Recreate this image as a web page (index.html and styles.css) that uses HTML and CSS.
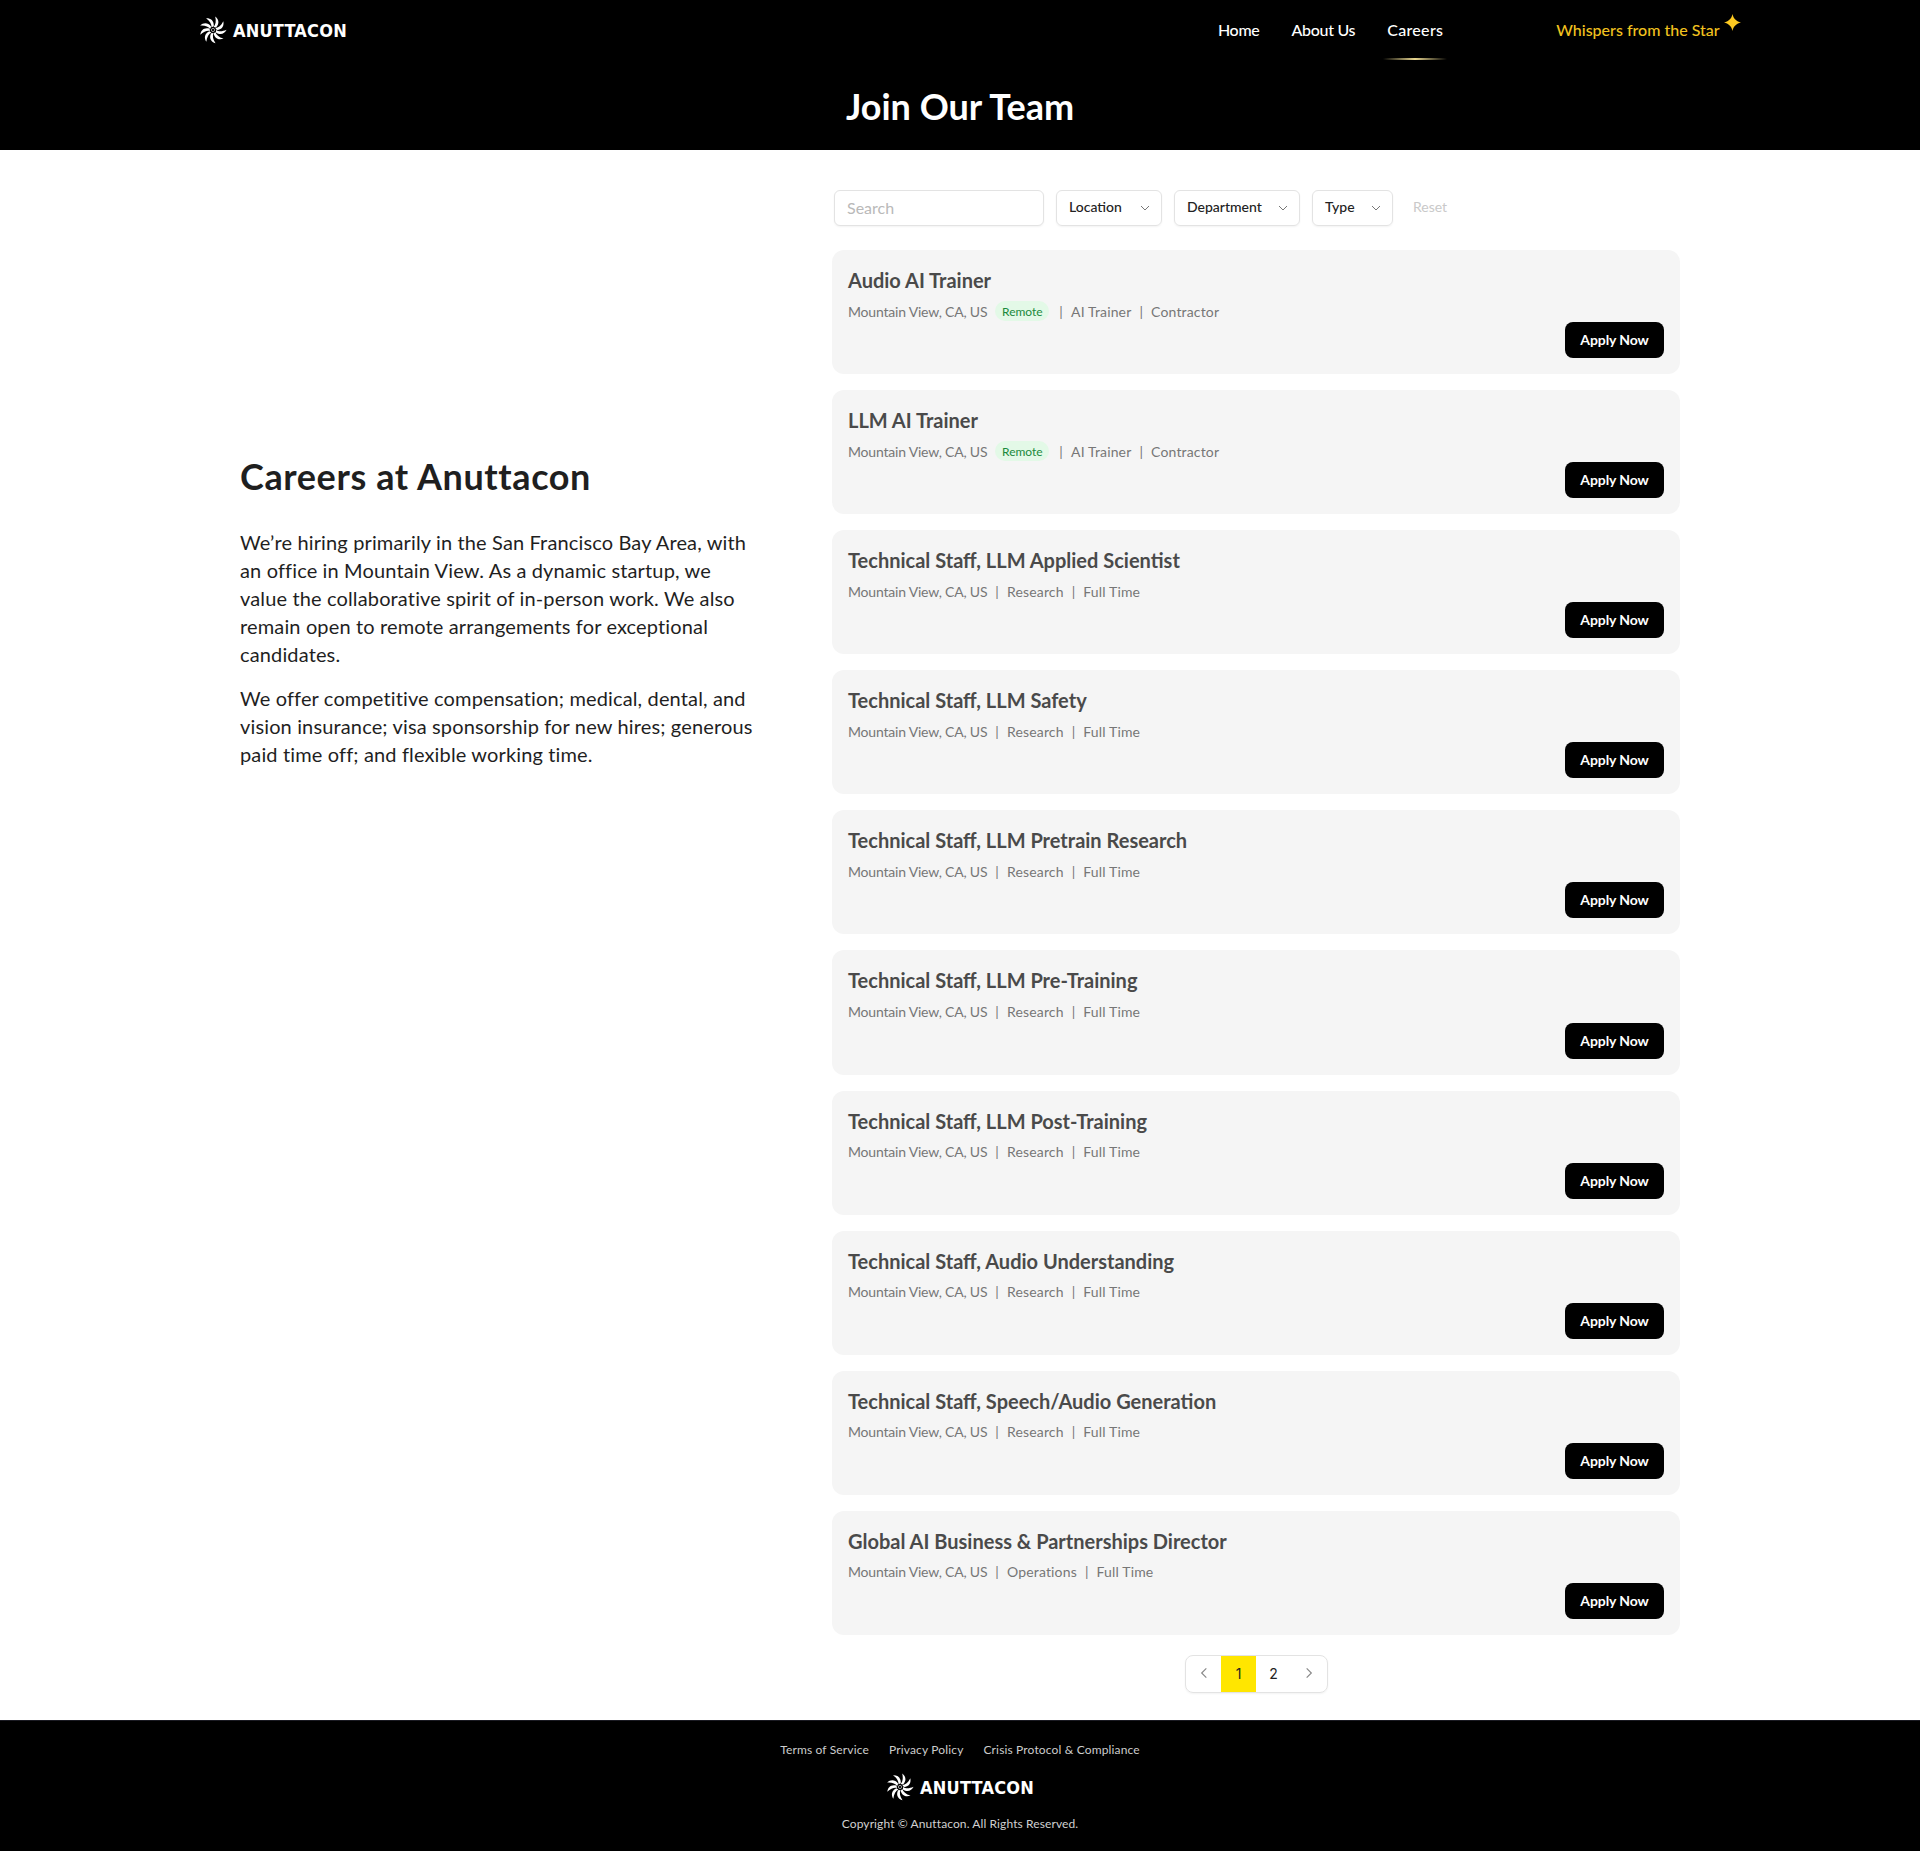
FILE: index.html
```html
<!DOCTYPE html>
<html lang="en">
<head>
<meta charset="utf-8">
<title>Careers - Anuttacon</title>
<link rel="stylesheet" href="styles.css">
</head>
<body>
<svg class="defs" width="0" height="0" aria-hidden="true">
  <defs>
    <path id="blade" d="M0.6 -3 C2.6 -5.2 3.4 -8.6 2.2 -13.4 C5.6 -10.8 7 -6.6 3 -2.4 Z"/>
    <g id="burst" fill="#fff">
      <use href="#blade"/>
      <use href="#blade" transform="rotate(40)"/>
      <use href="#blade" transform="rotate(80)"/>
      <use href="#blade" transform="rotate(120)"/>
      <use href="#blade" transform="rotate(160)"/>
      <use href="#blade" transform="rotate(200)"/>
      <use href="#blade" transform="rotate(240)"/>
      <use href="#blade" transform="rotate(280)"/>
      <use href="#blade" transform="rotate(320)"/>
      <circle r="1.6" fill="none" stroke="#fff" stroke-width=".6"/>
    </g>
  </defs>
</svg>
<header class="site-header">
  <div class="topbar">
    <a class="logo">
      <svg class="logo-mark" viewBox="-14 -14 28 28"><use href="#burst"/></svg>
      <span class="logo-word">ANUTTACON</span>
    </a>
    <nav class="nav">
      <a class="nav-link">Home</a>
      <a class="nav-link">About Us</a>
      <a class="nav-link nav-active">Careers</a>
    </nav>
    <a class="whispers">Whispers from the Star<svg class="spark" viewBox="0 0 16 16"><path d="M8 0 C8.8 4.2 11 6.6 16 8 C11 9.4 8.8 11.8 8 16 C7.2 11.8 5 9.4 0 8 C5 6.6 7.2 4.2 8 0 Z"/></svg></a>
  </div>
  <h1 class="page-title">Join Our Team</h1>
</header>
<main class="main">
  <section class="intro">
    <h2 class="intro-title">Careers at Anuttacon</h2>
    <p class="intro-text">We’re hiring primarily in the San Francisco Bay Area, with an office in Mountain View. As a dynamic startup, we value the collaborative spirit of in-person work. We also remain open to remote arrangements for exceptional candidates.</p>
    <p class="intro-text">We offer competitive compensation; medical, dental, and vision insurance; visa sponsorship for new hires; generous paid time off; and flexible working time.</p>
  </section>
  <section class="jobs">
    <div class="filters">
      <input class="search" type="text" placeholder="Search">
      <div class="select sel-loc">Location<svg class="chev" viewBox="0 0 12 12"><path d="M2 4l4 4 4-4"/></svg></div>
      <div class="select sel-dep">Department<svg class="chev" viewBox="0 0 12 12"><path d="M2 4l4 4 4-4"/></svg></div>
      <div class="select sel-type">Type<svg class="chev" viewBox="0 0 12 12"><path d="M2 4l4 4 4-4"/></svg></div>
      <span class="reset">Reset</span>
    </div>
    <div class="job-list">
      <article class="card"><h3 class="card-title">Audio AI Trainer</h3><div class="meta"><span class="place">Mountain View, CA, US</span><span class="tag">Remote</span><i class="sep sep-tag">|</i><span>AI Trainer</span><i class="sep">|</i><span>Contractor</span></div><a class="apply">Apply Now</a></article>
      <article class="card"><h3 class="card-title">LLM AI Trainer</h3><div class="meta"><span class="place">Mountain View, CA, US</span><span class="tag">Remote</span><i class="sep sep-tag">|</i><span>AI Trainer</span><i class="sep">|</i><span>Contractor</span></div><a class="apply">Apply Now</a></article>
      <article class="card"><h3 class="card-title">Technical Staff, LLM Applied Scientist</h3><div class="meta"><span class="place">Mountain View, CA, US</span><i class="sep">|</i><span>Research</span><i class="sep">|</i><span>Full Time</span></div><a class="apply">Apply Now</a></article>
      <article class="card"><h3 class="card-title">Technical Staff, LLM Safety</h3><div class="meta"><span class="place">Mountain View, CA, US</span><i class="sep">|</i><span>Research</span><i class="sep">|</i><span>Full Time</span></div><a class="apply">Apply Now</a></article>
      <article class="card"><h3 class="card-title">Technical Staff, LLM Pretrain Research</h3><div class="meta"><span class="place">Mountain View, CA, US</span><i class="sep">|</i><span>Research</span><i class="sep">|</i><span>Full Time</span></div><a class="apply">Apply Now</a></article>
      <article class="card"><h3 class="card-title">Technical Staff, LLM Pre-Training</h3><div class="meta"><span class="place">Mountain View, CA, US</span><i class="sep">|</i><span>Research</span><i class="sep">|</i><span>Full Time</span></div><a class="apply">Apply Now</a></article>
      <article class="card"><h3 class="card-title">Technical Staff, LLM Post-Training</h3><div class="meta"><span class="place">Mountain View, CA, US</span><i class="sep">|</i><span>Research</span><i class="sep">|</i><span>Full Time</span></div><a class="apply">Apply Now</a></article>
      <article class="card"><h3 class="card-title">Technical Staff, Audio Understanding</h3><div class="meta"><span class="place">Mountain View, CA, US</span><i class="sep">|</i><span>Research</span><i class="sep">|</i><span>Full Time</span></div><a class="apply">Apply Now</a></article>
      <article class="card"><h3 class="card-title">Technical Staff, Speech/Audio Generation</h3><div class="meta"><span class="place">Mountain View, CA, US</span><i class="sep">|</i><span>Research</span><i class="sep">|</i><span>Full Time</span></div><a class="apply">Apply Now</a></article>
      <article class="card"><h3 class="card-title">Global AI Business &amp; Partnerships Director</h3><div class="meta"><span class="place">Mountain View, CA, US</span><i class="sep">|</i><span>Operations</span><i class="sep">|</i><span>Full Time</span></div><a class="apply">Apply Now</a></article>
    </div>
    <div class="pager">
      <span class="page page-arrow"><svg viewBox="0 0 12 12"><path d="M8 2L4 6l4 4"/></svg></span>
      <span class="page page-on">1</span>
      <span class="page">2</span>
      <span class="page page-arrow"><svg viewBox="0 0 12 12"><path d="M4 2l4 4-4 4"/></svg></span>
    </div>
  </section>
</main>
<footer class="footer">
  <div class="foot-links"><a>Terms of Service</a><a>Privacy Policy</a><a>Crisis Protocol &amp; Compliance</a></div>
  <a class="logo foot-logo">
    <svg class="logo-mark" viewBox="-14 -14 28 28"><use href="#burst"/></svg>
    <span class="logo-word">ANUTTACON</span>
  </a>
  <p class="copyright">Copyright © Anuttacon. All Rights Reserved.</p>
</footer>
</body>
</html>
```
FILE: styles.css
```css
* { box-sizing: border-box; }
html, body { margin: 0; padding: 0; }
body { font-family: Lato, Roboto, sans-serif; background: #fff; color: #1f1f1f; }
.defs { position: absolute; }
h1, h2, h3, p { margin: 0; }

.site-header { background: #000; height: 150px; color: #fff; }
.topbar { height: 60px; padding-left: 199px; display: flex; align-items: center; position: relative; }
.logo { display: flex; align-items: center; gap: 6px; color: #fff; }
.logo-mark { width: 28px; height: 28px; flex: none; }
.logo-word { font-family: "DejaVu Sans", sans-serif; font-stretch: condensed; font-size: 18px; letter-spacing: .2px; line-height: 1; font-weight: 700; padding-top: 1px; }
.nav { display: flex; gap: 32px; margin-left: 871px; }
.nav-link { font-size: 16px; font-weight: 500; line-height: 60px; position: relative; letter-spacing: -.3px; }
.nav-active { letter-spacing: .3px; }
.nav-active::after { content: ""; position: absolute; left: -4px; right: -4px; bottom: 0; height: 2px; background: linear-gradient(90deg, transparent, #e8d690 50%, transparent); }
.whispers { color: #f2c21f; font-size: 16px; margin-left: 113px; position: relative; font-weight: 500; padding-bottom: 1px; }
.spark { position: absolute; width: 17px; height: 17px; right: -21px; top: -6px; fill: #fdc921; }
.page-title { text-align: center; font-size: 36px; font-weight: 700; line-height: 44px; margin-top: 24px; }

.main { display: flex; align-items: flex-start; height: 1570px; padding-left: 240px; }
.intro { width: 518px; margin-right: 2px; height: 937px; display: flex; flex-direction: column; justify-content: center; flex: none; }
.intro-title { font-size: 36px; font-weight: 700; line-height: 44px; margin-bottom: 30px; color: #1f1f1f; letter-spacing: .6px; }
.intro-text { font-size: 20px; line-height: 28px; margin-bottom: 16px; letter-spacing: .14px; }
.jobs { width: 848px; margin-left: 72px; padding-top: 40px; }
.filters { display: flex; align-items: center; height: 36px; padding-left: 2px; gap: 12px; }
.search { width: 210px; height: 36px; border: 1px solid #e3e3e3; border-radius: 6px; padding: 0 12px 2px; font: 16px Lato, sans-serif; box-shadow: 0 1px 2px rgba(0,0,0,.05); }
.search::placeholder { color: #b9b9b9; }
.select { height: 36px; border: 1px solid #e3e3e3; border-radius: 6px; padding: 0 12px 3px; display: flex; align-items: center; justify-content: space-between; font-size: 14px; font-weight: 500; color: #222; box-shadow: 0 1px 2px rgba(0,0,0,.05); }
.sel-loc { width: 106px; }
.sel-dep { width: 126px; }
.sel-type { width: 81px; }
.chev { width: 12px; height: 12px; fill: none; stroke: #777; stroke-width: 1; margin-right: -2px; margin-top: 3px; }
.reset { font-size: 14px; color: #c9c9c9; margin-left: 8px; padding-bottom: 3px; }
.job-list { display: flex; flex-direction: column; gap: 16px; margin-top: 24px; }
.card { height: 124.1px; background: #f5f5f5; border-radius: 12px; padding: 16px; position: relative; }
.card-title { font-size: 20px; font-weight: 700; line-height: 28px; color: #4a4a4a; }
.meta { display: flex; align-items: center; height: 24px; margin-top: 5px; font-size: 14px; color: #777; letter-spacing: .15px; }
.place { letter-spacing: -.2px; }
.sep { font-style: normal; margin: 0 8px; }
.sep-tag { margin-left: 10px; }
.tag { margin-left: 8px; width: 54px; text-align: center; background: #e3f9e7; color: #1a8a3c; font-size: 12px; border-radius: 10px; height: 20px; line-height: 21px; letter-spacing: 0; }
.apply { position: absolute; right: 16px; bottom: 16px; width: 99px; height: 36px; line-height: 35px; background: #000; color: #fff; text-align: center; border-radius: 8px; font-size: 14px; font-weight: 700; letter-spacing: -.1px; }
.pager { display: flex; width: 143px; height: 38px; margin: 20px 0 0 353px; border: 1px solid #e3e3e3; border-radius: 8px; overflow: hidden; box-shadow: 0 1px 2px rgba(0,0,0,.05); }
.page { width: 35px; display: flex; align-items: center; justify-content: center; font-size: 14px; font-family: Inter, sans-serif; color: #222; padding-bottom: 1px; }
.page-on { background: #ffe600; }
.page-arrow svg { width: 14px; height: 14px; fill: none; stroke: #888; stroke-width: 1; }

.footer { background: #000; height: 131px; color: #ccc; display: flex; flex-direction: column; align-items: center; border-top: 1px solid #1a1a22; }
.foot-links { display: flex; gap: 20px; font-size: 12px; margin-top: 21px; line-height: 16px; letter-spacing: .15px; }
.foot-logo { margin-top: 15px; }
.copyright { font-size: 12px; line-height: 16px; margin-top: 15px; color: #d0d0d0; letter-spacing: .1px; }
```
